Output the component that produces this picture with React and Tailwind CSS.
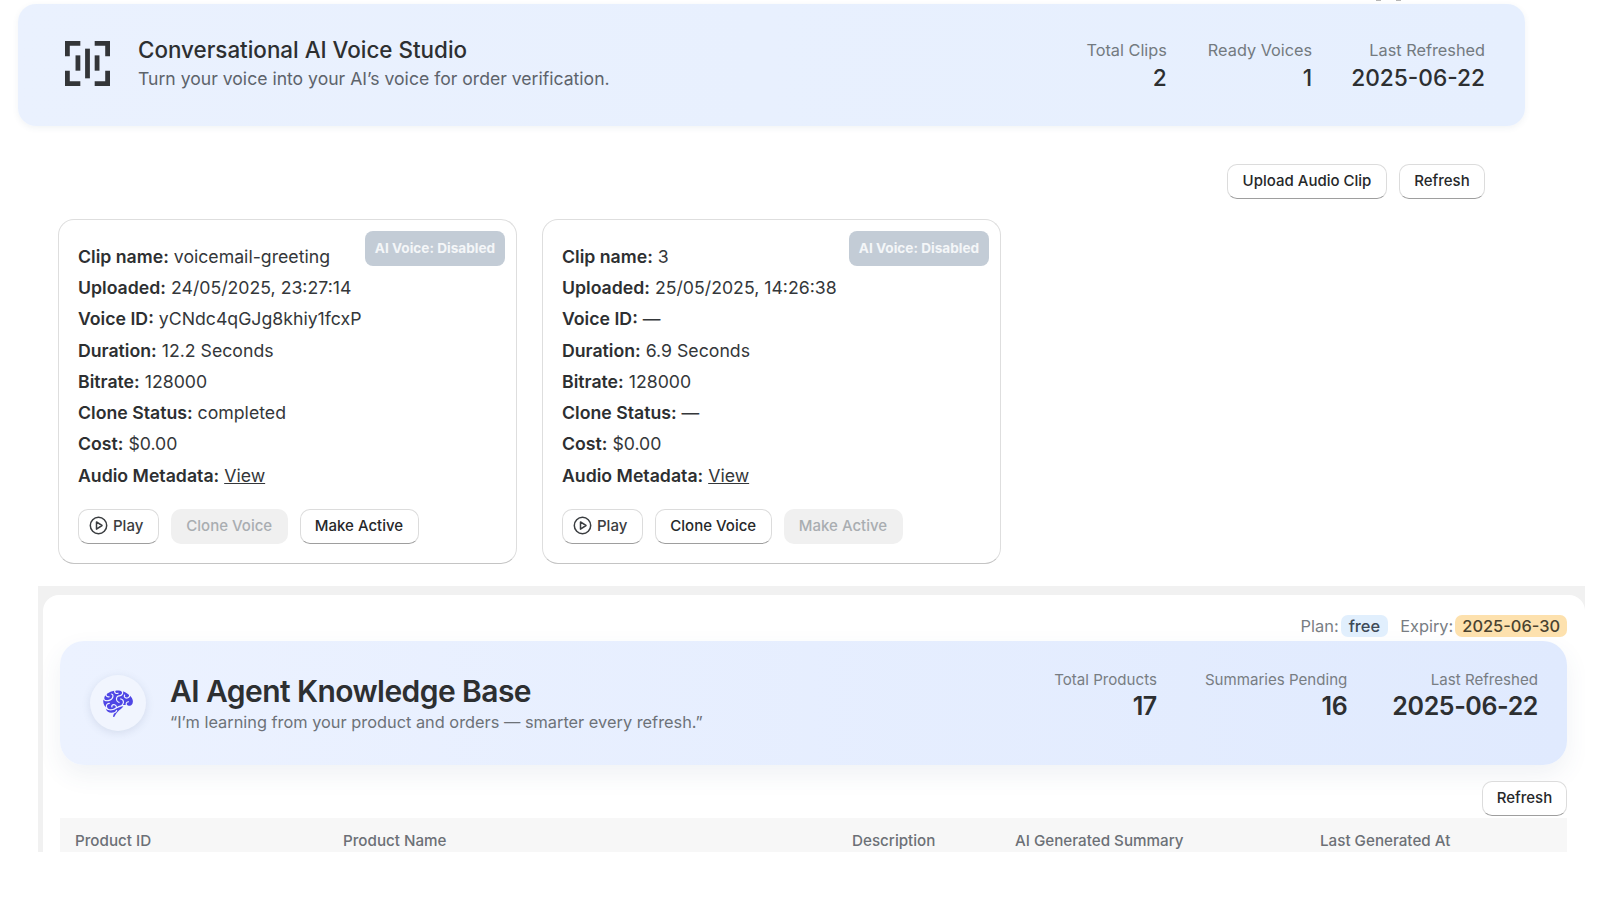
import React from 'react';
import { GiBrain } from 'react-icons/gi';

const clips = [
  {
    name: 'voicemail-greeting',
    uploaded: '24/05/2025, 23:27:14',
    voiceId: 'yCNdc4qGJg8khiy1fcxP',
    duration: '12.2 Seconds',
    status: 'completed',
    disabledAction: 'clone',
  },
  {
    name: '3',
    uploaded: '25/05/2025, 14:26:38',
    voiceId: '—',
    duration: '6.9 Seconds',
    status: '—',
    disabledAction: 'active',
  },
];

const Stat = ({ label, value, className = '' }) => (
  <div className={`text-right ${className}`}>
    <div className="text-[16.3px] leading-[20px] text-[#737a80]">{label}</div>
    <div className="mt-[3px] text-[22.7px] leading-[30px] font-medium text-[#2d2f31]">{value}</div>
  </div>
);

const BigStat = ({ label, value, className = '' }) => (
  <div className={`text-right ${className}`}>
    <div className="text-[15.1px] leading-[19px] text-[#787d83]">{label}</div>
    <div className="mt-[2px] text-[25px] leading-[30px] font-semibold tracking-[-0.4px] text-[#2d2f31]">{value}</div>
  </div>
);

const Btn = ({ children, disabled, className = '' }) =>
  disabled ? (
    <button className={`h-[35px] rounded-[10px] bg-[#f0f0f0] text-[15px] font-medium text-[#a9adb1] ${className}`}>{children}</button>
  ) : (
    <button className={`h-[35px] rounded-[10px] border border-[#dcdcdc] border-b-[#9e9e9e] bg-white text-[15px] font-medium text-[#26282a] ${className}`}>
      {children}
    </button>
  );

const Row = ({ label, children }) => (
  <div className="h-[31.25px] leading-[31px] text-[17.7px] text-[#34373a]">
    <span className="font-semibold text-[#2d2f31]">{label}:</span> {children}
  </div>
);

const ClipCard = ({ clip }) => (
  <div className="relative h-[345px] w-[459px] rounded-[16px] border border-[#dedede] border-b-[#c4c4c4] px-[19px] pt-[20.9px]">
    <div className="absolute right-[11px] top-[11px] flex h-[35px] w-[140px] items-center justify-center rounded-[8px] bg-[#c3ccd6] pb-px text-[13.6px] font-bold text-[#f4f6f8]">
      AI Voice: Disabled
    </div>
    <Row label="Clip name">{clip.name}</Row>
    <Row label="Uploaded">{clip.uploaded}</Row>
    <Row label="Voice ID">{clip.voiceId}</Row>
    <Row label="Duration">{clip.duration}</Row>
    <Row label="Bitrate">128000</Row>
    <Row label="Clone Status">{clip.status}</Row>
    <Row label="Cost">$0.00</Row>
    <Row label="Audio Metadata">
      <span className="underline">View</span>
    </Row>
    <div className="mt-[18.5px] flex gap-[12px]">
      <Btn className="flex w-[81px] items-center gap-[5px] pb-[2px] pl-[10px]">
        <svg width="19" height="19" viewBox="0 0 19 19" fill="none" stroke="#3a3d40" strokeWidth="1.5">
          <circle cx="9.5" cy="9.5" r="8.2" />
          <path d="M7.5 5.9 13 9.5 7.5 13.1Z" strokeLinejoin="round" />
        </svg>
        <span className="text-[#3a3d40]">Play</span>
      </Btn>
      <Btn className="w-[116.5px] pb-px" disabled={clip.disabledAction === 'clone'}>Clone Voice</Btn>
      <Btn className="w-[119px] pb-px" disabled={clip.disabledAction === 'active'}>Make Active</Btn>
    </div>
  </div>
);

const App = () => {
  return (
    <div className="h-[900px] w-[1600px] overflow-hidden bg-white font-[family-name:Inter,sans-serif]">
      <div className="flex h-[4px] items-start gap-[15px] pl-[1376px]">
        <div className="h-px w-[5px] bg-[#b5b5b5]" />
        <div className="h-px w-[5px] bg-[#b5b5b5]" />
      </div>
      <div className="pl-[18px]">
        <div className="flex h-[122px] w-[1507px] items-center justify-between rounded-[18px] bg-gradient-to-r from-[#eaf1fe] to-[#e6effe] pl-[47px] pr-[40px] shadow-[0_2px_6px_rgba(60,80,120,0.07)]">
          <div className="flex items-center gap-[28px]">
            <svg className="mb-[3px]" width="45" height="45" viewBox="0 0 47 47" fill="#333538">
              <path d="M0 0h16v5H5v11H0zM47 0H31v5h11v11h5zM0 47h16v-5H5V31H0zM47 47H31v-5h11V31h5z" />
              <rect x="11" y="15" width="5" height="16" />
              <rect x="21" y="8" width="5" height="31" />
              <rect x="31" y="15" width="5" height="16" />
            </svg>
            <div className="pb-[3px]">
              <div className="text-[22.4px] leading-[28px] font-medium text-[#2d2f31]">Conversational AI Voice Studio</div>
              <div className="mt-[3px] text-[17.6px] leading-[24px] text-[#5d636b]">Turn your voice into your AI’s voice for order verification.</div>
            </div>
          </div>
          <div className="flex gap-[41px] pt-[2px]">
            <Stat label="Total Clips" value="2" />
            <Stat label="Ready Voices" value="1" />
            <Stat label="Last Refreshed" value="2025-06-22" className="-ml-[2px]" />
          </div>
        </div>
      </div>

      <div className="mt-[38px] flex w-[1485px] justify-end gap-[12px]">
        <Btn className="w-[160px]">Upload Audio Clip</Btn>
        <Btn className="w-[86px]">Refresh</Btn>
      </div>

      <div className="ml-[58px] mt-[20px] flex gap-[25px]">
        {clips.map((clip) => (
          <ClipCard key={clip.name} clip={clip} />
        ))}
      </div>

      <div className="ml-[38px] mt-[22px] h-[266px] w-[1547px] overflow-hidden bg-[#f1f1f1] pl-[4.5px] pt-[9px]">
        <div className="h-full rounded-t-[16px] bg-white pl-[17.5px] pr-[18px]">
          <div className="flex h-[46px] items-center justify-end pt-[16px] text-[16.4px] text-[#787d83]">
            <span>Plan:</span>
            <span className="ml-[2px] rounded-[7px] bg-[#e1effd] px-[8px] text-[16.4px] leading-[22px] font-medium text-[#3e4a57]">free</span>
            <span className="ml-[12px]">Expiry:</span>
            <span className="ml-[2px] rounded-[7px] bg-[#fde1ae] px-[7px] text-[16.4px] leading-[22px] font-medium text-[#4a4330]">2025-06-30</span>
          </div>
          <div className="flex h-[124px] items-center justify-between rounded-[24px] bg-gradient-to-r from-[#ecf2ff] to-[#e0eafe] pl-[30px] pr-[29px] shadow-[0_10px_24px_rgba(70,90,130,0.08)]">
            <div className="flex items-center gap-[24px]">
              <div className="flex h-[56px] w-[56px] items-center justify-center rounded-full bg-[#f1f5fe] shadow-[0_2px_8px_rgba(70,90,130,0.14)]">
                <GiBrain className="text-[32px] text-[#4f46e5]" />
              </div>
              <div>
                <div className="-mt-[1px] text-[30px] leading-[38px] font-semibold tracking-[-0.57px] text-[#2d2f31]">AI Agent Knowledge Base</div>
                <div className="mt-[1px] text-[16.35px] leading-[22px] text-[#6d7278]">“I’m learning from your product and orders — smarter every refresh.”</div>
              </div>
            </div>
            <div className="flex gap-[48px] pb-[15px]">
              <BigStat label="Total Products" value="17" />
              <BigStat label="Summaries Pending" value="16" />
              <BigStat label="Last Refreshed" value="2025-06-22" className="-ml-[3px]" />
            </div>
          </div>
          <div className="mt-[16px] flex justify-end">
            <Btn className="w-[85px]">Refresh</Btn>
          </div>
          <div className="mt-[2px] grid h-[36px] grid-cols-[268px_509px_163px_305px_262px] bg-[#f7f7f7] pt-[14px] text-[15.2px] leading-[18px] font-medium text-[#6c7076]">
            <div className="pl-[15px]">Product ID</div>
            <div className="pl-[15px]">Product Name</div>
            <div className="pl-[15px]">Description</div>
            <div className="pl-[15px]">AI Generated Summary</div>
            <div className="pl-[15px]">Last Generated At</div>
          </div>
        </div>
      </div>
    </div>
  );
};

export default App;
